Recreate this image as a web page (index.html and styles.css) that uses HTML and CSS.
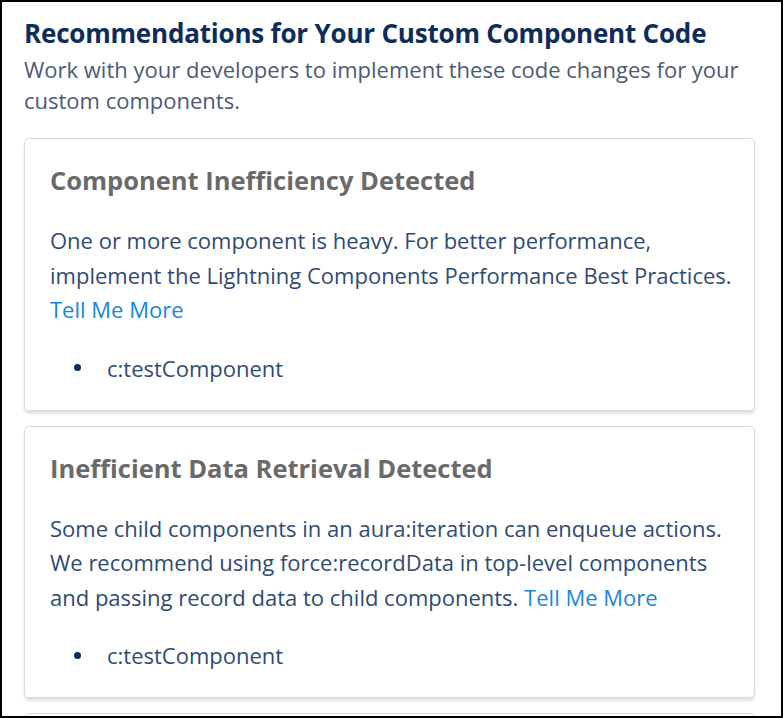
FILE: index.html
```html
<!DOCTYPE html>
<html lang="en">
<head>
<meta charset="UTF-8">
<meta name="viewport" content="width=device-width, initial-scale=1.0">
<title>Recommendations</title>
<link rel="stylesheet" href="styles.css">
</head>
<body>
<div class="frame">
  <h1 class="heading">Recommendations for Your Custom Component Code</h1>
  <p class="intro">Work with your developers to implement these code changes for your custom components.</p>

  <div class="card">
    <h2 class="cardTitle">Component Inefficiency Detected</h2>
    <p class="cardText">One or more component is heavy. For better performance, implement the Lightning Components Performance Best Practices. <a class="more" href="#">Tell Me More</a></p>
    <ul class="compList">
      <li>c:testComponent</li>
    </ul>
  </div>

  <div class="card">
    <h2 class="cardTitle">Inefficient Data Retrieval Detected</h2>
    <p class="cardText">Some child components in an aura:iteration can enqueue actions. We recommend using force:recordData in top-level components and passing record data to child components. <a class="more" href="#">Tell Me More</a></p>
    <ul class="compList">
      <li>c:testComponent</li>
    </ul>
  </div>

  <div class="card"></div>
</div>
</body>
</html>
```

FILE: styles.css
```css
body {
  margin: 0;
  background: #fff;
  font-family: "Open Sans", "Noto Sans", sans-serif;
}

.frame {
  box-sizing: border-box;
  height: 718px;
  width: 783px;
  border: 2px solid #000;
  padding: 14px 26px 0 22px;
  overflow: hidden;
}

.heading {
  margin: 0;
  font-size: 26px;
  font-weight: 700;
  line-height: 34px;
  color: #0e2c5a;
  letter-spacing: -0.2px;
}

.intro {
  margin: 4px 0 22px;
  font-size: 22px;
  line-height: 31px;
  color: #4a5b78;
}

.card {
  border: 1px solid #d9dbe0;
  border-radius: 5px;
  box-shadow: 0 3px 3px rgba(0, 0, 0, 0.12);
  padding: 24px 18px 25px 25px;
  margin-bottom: 15px;
  min-height: 40px;
}

.cardTitle {
  margin: 0 0 26px;
  font-size: 25.5px;
  font-weight: 700;
  line-height: 34px;
  color: #6a6a6a;
}

.cardText {
  margin: 0;
  font-size: 22px;
  line-height: 34.5px;
  color: #2f4b74;
}

.more {
  color: #1a86d8;
  text-decoration: none;
}

.compList {
  list-style: none;
  margin: 24px 0 0;
  padding-left: 24px;
  font-size: 22px;
  line-height: 34px;
  color: #2f4b74;
}

.compList li {
  display: flex;
  align-items: center;
}

.compList li::before {
  content: '';
  width: 7px;
  height: 7px;
  border-radius: 50%;
  background: #0e2c5a;
  margin-right: 26px;
}
```
